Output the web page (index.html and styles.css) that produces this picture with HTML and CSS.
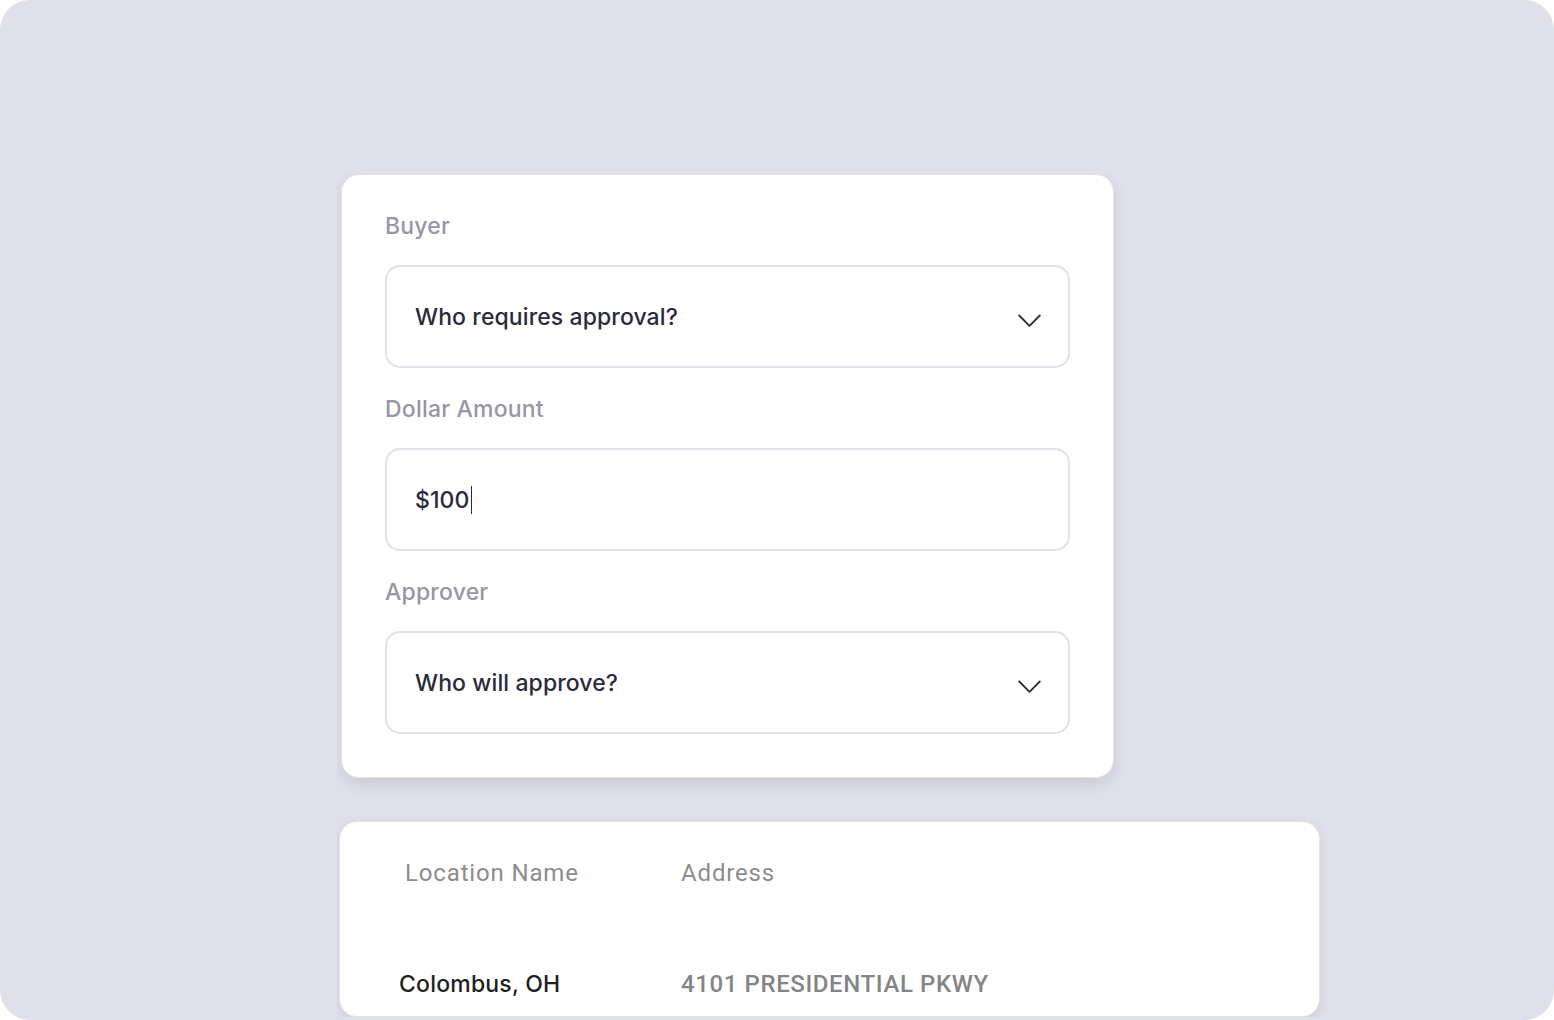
FILE: index.html
```html
<!DOCTYPE html>
<html lang="en">
<head>
<meta charset="utf-8">
<title>Approval rule</title>
<link rel="stylesheet" href="styles.css">
</head>
<body>
<div class="frame">
  <div class="stack">
    <form class="card form-card">
      <div class="field">
        <div class="label">Buyer</div>
        <div class="input select">
          <span class="value">Who requires approval?</span>
          <svg class="chev" width="23" height="14" viewBox="0 0 23 14" fill="none"><path d="M1.2 1.5 L11.5 11.8 L21.8 1.5" stroke="#2b2a3a" stroke-width="1.8" stroke-linecap="round" stroke-linejoin="round"/></svg>
        </div>
      </div>
      <div class="field">
        <div class="label">Dollar Amount</div>
        <div class="input">
          <span class="value">$100</span><span class="caret"></span>
        </div>
      </div>
      <div class="field">
        <div class="label">Approver</div>
        <div class="input select">
          <span class="value">Who will approve?</span>
          <svg class="chev" width="23" height="14" viewBox="0 0 23 14" fill="none"><path d="M1.2 1.5 L11.5 11.8 L21.8 1.5" stroke="#2b2a3a" stroke-width="1.8" stroke-linecap="round" stroke-linejoin="round"/></svg>
        </div>
      </div>
    </form>
    <div class="card table-card">
      <div class="row head">
        <div class="col name">Location Name</div>
        <div class="col addr">Address</div>
      </div>
      <div class="row body-row">
        <div class="col name">Colombus, OH</div>
        <div class="col addr">4101 PRESIDENTIAL PKWY</div>
      </div>
    </div>
  </div>
</div>
</body>
</html>
```
FILE: styles.css
```css
html, body {
  margin: 0;
  padding: 0;
  background: #ffffff;
}
.frame {
  width: 1554px;
  height: 1020px;
  background: #e0e0ea;
  border-radius: 30px;
  overflow: hidden;
  box-sizing: border-box;
  padding-top: 174px;
  padding-left: 337px;
}
.stack {
  display: flex;
  flex-direction: column;
  align-items: flex-start;
  height: 843px;
  overflow: hidden;
  padding: 0 20px 0 4px;
}
.card {
  background: #ffffff;
  border-radius: 18px;
  box-sizing: border-box;
}
.form-card {
  width: 773px;
  margin: 0;
  padding: 37px 43px 43px 43px;
  border: 1px solid #e3e3ec;
  box-shadow: 0 6px 14px rgba(60, 60, 100, 0.13);
  display: flex;
  flex-direction: column;
  gap: 27px;
  font-family: Inter, "Noto Sans", sans-serif;
}
.field {
  display: flex;
  flex-direction: column;
}
.label {
  font-size: 23px;
  line-height: 28px;
  color: #9795a6;
  font-weight: 500;
  margin-bottom: 25px;
  letter-spacing: 0.2px;
}
.input {
  height: 103px;
  box-sizing: border-box;
  border: 2px solid #e1e0eb;
  border-radius: 15px;
  display: flex;
  align-items: center;
  padding: 0 27px 0 28px;
  font-size: 23px;
  font-weight: 500;
  color: #2a2a3b;
  letter-spacing: 0.1px;
}
.input .value {
  line-height: 28px;
}
.select {
  justify-content: space-between;
}
.chev {
  margin-top: 9px;
  width: 23px;
  height: 14px;
}
.caret {
  display: inline-block;
  width: 1.5px;
  height: 28px;
  background: #2a2a3b;
  margin-left: 1px;
  margin-top: 1px;
}
.table-card {
  margin-top: 43px;
  margin-left: -2px;
  width: 981px;
  height: 230px;
  border: 1px solid #e3e3ec;
  box-shadow: 0 4px 12px rgba(60, 60, 100, 0.12);
  font-family: Roboto, "Liberation Sans", Arial, sans-serif;
  padding-left: 59px;
}
.row {
  display: flex;
  font-size: 24px;
  line-height: 28px;
}
.row.head {
  padding-top: 37px;
  color: #8c8c8c;
  letter-spacing: 0.85px;
}
.row.body-row {
  padding-top: 83px;
}
.col.name {
  width: 282px;
}
.head .col.name {
  padding-left: 6px;
  width: 276px;
}
.body-row .col.name {
  color: #1f1f22;
  font-family: Inter, "Noto Sans", sans-serif;
  font-weight: 500;
  font-size: 23px;
  letter-spacing: 0.2px;
}
.body-row .col.addr {
  color: #858585;
  font-weight: 500;
  font-size: 24px;
  letter-spacing: 0.6px;
}
```
